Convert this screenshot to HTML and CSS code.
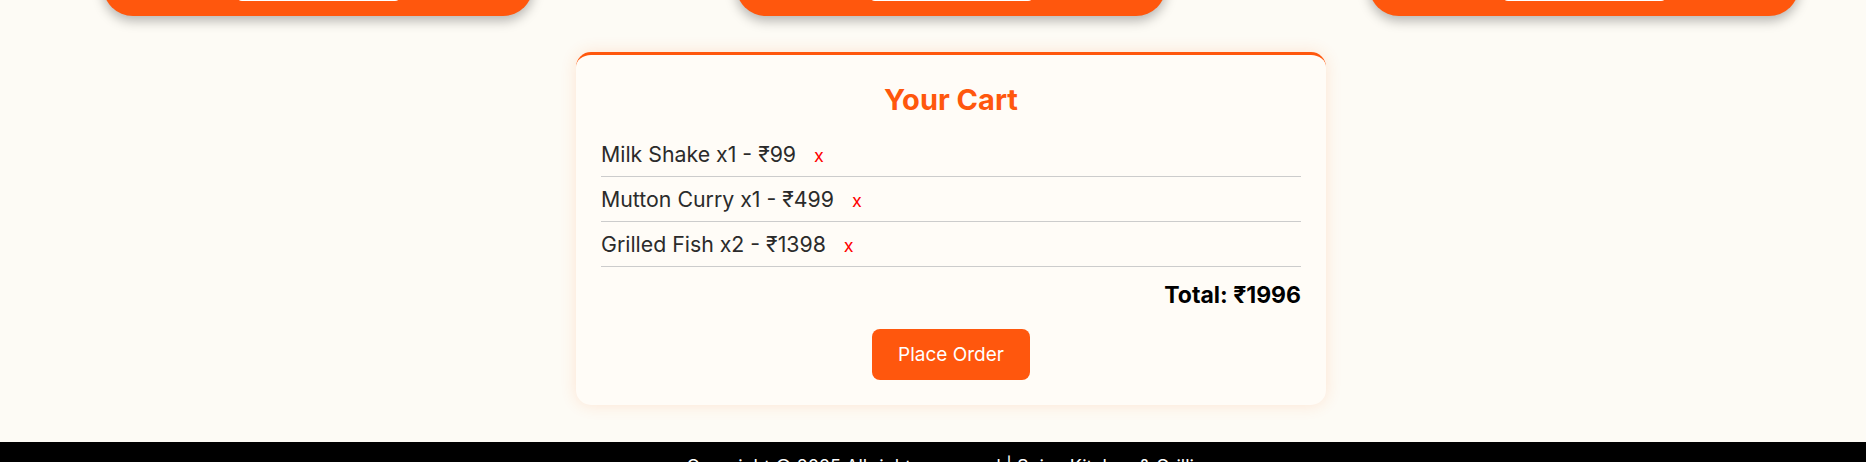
FILE: index.html
```html
<!DOCTYPE html>
<html lang="en">
<head>
<meta charset="utf-8">
<title>Cart</title>
<link rel="stylesheet" href="styles.css">
</head>
<body>
<div class="page">
  <section class="menu">
    <div class="card"><div class="card-btn"></div></div>
    <div class="card"><div class="card-btn"></div></div>
    <div class="card"><div class="card-btn"></div></div>
  </section>
  <section class="cart">
    <h2 class="cart-title">Your Cart</h2>
    <ul class="cart-list">
      <li class="cart-item"><span>Milk Shake x1 - ₹99</span><button class="remove">x</button></li>
      <li class="cart-item"><span>Mutton Curry x1 - ₹499</span><button class="remove">x</button></li>
      <li class="cart-item"><span>Grilled Fish x2 - ₹1398</span><button class="remove">x</button></li>
    </ul>
    <p class="total">Total: ₹1996</p>
    <button class="order">Place Order</button>
  </section>
</div>
<footer class="footer">Copyright © 2025 All rights reserved | Spice Kitchen &amp; Grilling</footer>
</body>
</html>
```
FILE: styles.css
```css
* { box-sizing: border-box; }
body {
  margin: 0;
  background: #fdfbf5;
  font-family: "Inter", "Noto Sans", sans-serif;
  color: #2b2b2b;
  overflow: hidden;
}
.page { padding-left: 36px; }
.menu {
  display: flex;
  gap: 203px;
  padding: 0 67px;
  margin-top: -200px;
}
.card {
  flex: 0 0 430px;
  height: 216px;
  background: #ff570d;
  border-radius: 30px;
  box-shadow: 0 5px 12px rgba(0,0,0,0.28);
  display: flex;
  align-items: flex-end;
  justify-content: center;
  padding-bottom: 15px;
}
.card-btn {
  width: 165px;
  height: 40px;
  background: #fff;
  border-radius: 6px;
}
.cart {
  width: 750px;
  margin: 36px auto 0;
  background: #fffcf7;
  border-top: 3px solid #ff570d;
  border-radius: 15px;
  padding: 25px;
  box-shadow: 0 0 16px rgba(255, 110, 40, 0.16);
  text-align: center;
}
.cart-title {
  margin: 2px 0 15px;
  font-size: 29px;
  line-height: 35px;
  font-weight: 700;
  color: #ff570d;
}
.cart-list {
  list-style: none;
  margin: 0;
  padding: 0;
  text-align: left;
}
.cart-item {
  display: block;
  padding: 10px 0;
  height: 45px;
  line-height: 24px;
  font-size: 21.3px;
  border-bottom: 1px solid #cccccc;
}
.remove {
  border: 0;
  background: none;
  padding: 0;
  margin-left: 18px;
  font-family: inherit;
  font-size: 18px;
  line-height: 18px;
  color: #ff0000;
  vertical-align: baseline;
}
.total {
  margin: 14px 0 20px;
  text-align: right;
  font-size: 23px;
  line-height: 28px;
  font-weight: 700;
  color: #000;
}
.order {
  border: 0;
  background: #ff570d;
  color: #fff;
  font-family: inherit;
  font-size: 19px;
  line-height: 23px;
  padding: 14px 26px;
  border-radius: 8px;
}
.footer {
  margin-top: 37px;
  background: #000;
  color: #fff;
  text-align: center;
  font-size: 18px;
  padding: 14px 0 14px 36px;
}
```
